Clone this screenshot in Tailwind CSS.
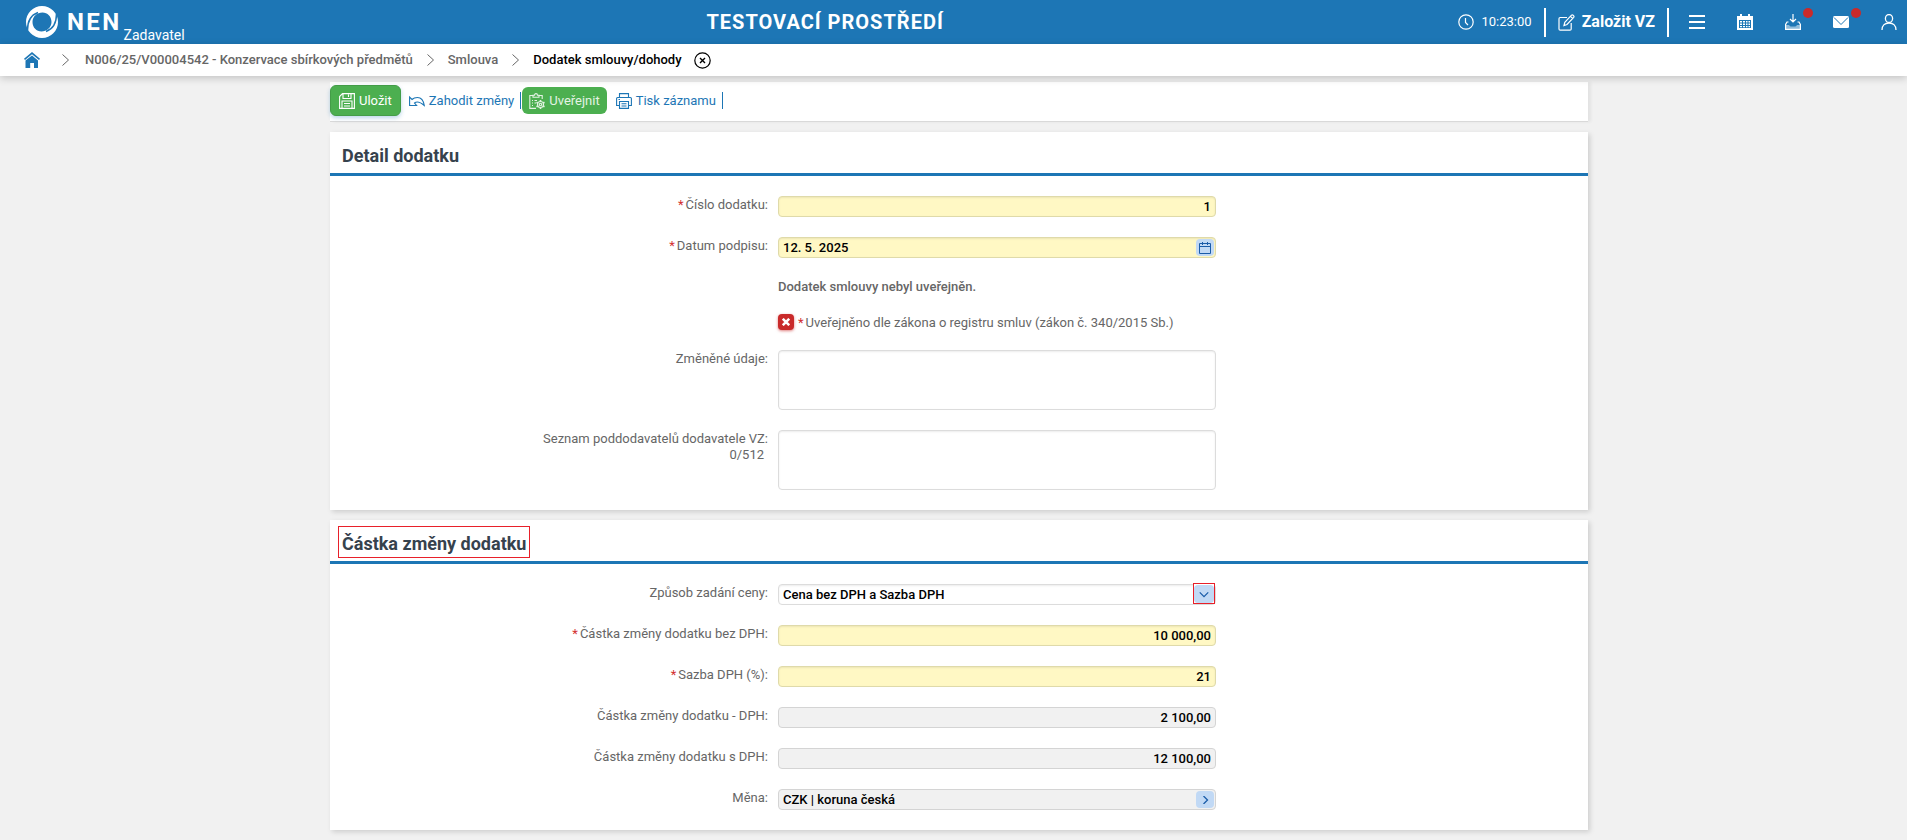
<!DOCTYPE html>
<html lang="cs">
<head>
  <meta charset="UTF-8" />
  <meta name="viewport" content="width=device-width, initial-scale=1" />
  <title>NEN - Dodatek smlouvy/dohody</title>
  <script src="https://cdn.jsdelivr.net/npm/@tailwindcss/browser@4"></script>
</head>
<body class="bg-[#f1f1f1] font-[Roboto,sans-serif] text-[13px] leading-4 text-[#666] min-h-screen">

  <!-- Top bar -->
  <header class="flex items-center justify-between h-11 bg-[#1d76b5] text-white">
    <a href="#" class="flex items-center pl-[26px] pr-2 h-11">
      <svg class="size-8 shrink-0" viewBox="0 0 32 32">
        <path fill="currentColor" fill-rule="evenodd" d="M16 0a16 16 0 1 1 0 32 16 16 0 0 1 0-32zm.5 6.500C11 6.500 6.500 10.500 6.500 16S10.500 25.500 15.500 25.500 25.500 21.500 25.500 16 21.500 6.500 16.500 6.500z" />
        <path d="M1.500 24C1.500 15 5 9 12 6.500M30.500 8c0 9-3.500 15-10.500 17.500" fill="none" stroke="#1d76b5" stroke-width="1.500" />
      </svg>
      <span class="pl-[9px] text-2xl font-bold tracking-widest">NEN</span>
      <span class="self-end pl-[2px] pb-px text-sm leading-4">Zadavatel</span>
    </a>
    <div class="text-xl font-bold tracking-wider">TESTOVACÍ PROSTŘEDÍ</div>
    <div class="flex items-center justify-end pr-[10px]">
      <svg class="size-4 mr-2" viewBox="0 0 16 16" fill="none" stroke="currentColor" stroke-width="1.2"><circle cx="8" cy="8" r="7.2" /><path d="M7.5 4v4.5L10 11" /></svg>
      <span>10:23:00</span>
      <span class="w-[2px] h-[29px] ml-3 mr-3 bg-white"></span>
      <button type="button" class="flex items-center gap-[7px] text-base font-bold cursor-pointer">
        <svg class="size-[17px]" viewBox="0 0 17 17" fill="none" stroke="currentColor" stroke-width="1.2"><path d="M9 3.5H2.200A1.200 1.200 0 0 0 1 4.700V15q0 1.200 1.200 1.200H12q1.200 0 1.200-1.200V9" /><path d="M6 11.500l.8-3.200L13.500 1.200q.8-.6 1.600 0l.6.6q.6.800 0 1.600L9 10.500zM12.500 2.300l2.200 2.200" /></svg>
        Založit VZ
      </button>
      <span class="w-[2px] h-[29px] ml-3 mr-5 bg-white"></span>
      <div class="flex items-center gap-8">
        <button type="button" aria-label="Menu" class="cursor-pointer"><svg class="size-4" viewBox="0 0 16 16" stroke="currentColor" stroke-width="2"><path d="M0 2h16M0 8h16M0 14h16" /></svg></button>
        <button type="button" aria-label="Kalendář" class="cursor-pointer">
          <svg class="size-4" viewBox="0 0 16 16"><path fill="currentColor" d="M0 2h3V0h2v2h6V0h2v2h3v14H0z" /><path fill="#1d76b5" d="M2 6h12v8H2z" /><path fill="currentColor" d="M3 7h2v1.500H3zM6 7h2v1.500H6zM9 7h1.500v1.500H9zM11.500 7H13v1.500h-1.500zM3 9.500h2V11H3zM6 9.500h2V11H6zM9 9.500h1.500V11H9zM11.500 9.500H13V11h-1.500zM3 12h2v1.300H3zM6 12h2v1.300H6zM9 12h1.500v1.300H9zM11.500 12H13v1.300h-1.500z" /></svg>
        </button>
        <button type="button" aria-label="Stažené soubory" class="relative cursor-pointer">
          <svg class="size-4" viewBox="0 0 16 16" fill="none" stroke="currentColor" stroke-width="1.200"><path d="M8 0v8M5 5l3 3 3-3M3.500 8H2L.6 10.500v4.900h14.800v-4.900L14 8h-1.500" /><path d="M.6 11H4q1 1.500 2 1.500h4q1 0 2-1.500h3.400V15.400H.6z" fill="currentColor" fill-opacity=".5" stroke="none" /></svg>
          <span class="absolute -top-[6px] left-[18px] size-[10px] rounded-full bg-[#c92a2a]"></span>
        </button>
        <button type="button" aria-label="Zprávy" class="relative cursor-pointer">
          <svg class="size-4" viewBox="0 0 16 16"><rect y="2" width="16" height="12" rx="1.500" fill="currentColor" /><path d="M1 3.500l7 7 7-7" fill="none" stroke="#1d76b5" /></svg>
          <span class="absolute -top-[6px] left-[18px] size-[10px] rounded-full bg-[#c92a2a]"></span>
        </button>
        <button type="button" aria-label="Uživatel" class="cursor-pointer"><svg class="size-4" viewBox="0 0 16 16" fill="none" stroke="currentColor" stroke-width="1.300"><ellipse cx="8" cy="4.500" rx="3.600" ry="4" /><path d="M1 16c0-4.500 3-7 7-7s7 2.500 7 7" /></svg></button>
      </div>
    </div>
  </header>

  <!-- Breadcrumbs -->
  <nav class="relative flex items-center h-8 pl-6 bg-white font-medium shadow-[0_2px_8px_rgba(0,0,0,0.2)]">
    <a href="#" aria-label="Domů"><svg class="size-4" viewBox="0 0 16 16" fill="#1d76b5"><path d="M8 0l8 6.700-1 1.200L8 2.200 1 7.900 0 6.700z" /><path d="M8 3.500l6 5V16h-4v-5H6.200v5H1.500V8.500z" /></svg></a>
    <svg class="w-[7px] h-3 ml-[22px] mr-4" viewBox="0 0 7 12" fill="none" stroke="#666"><path d="M.5.5L6.500 6l-6 5.500" /></svg>
    <a href="#">N006/25/V00004542 - Konzervace sbírkových předmětů</a>
    <svg class="w-[7px] h-3 mx-[14px]" viewBox="0 0 7 12" fill="none" stroke="#666"><path d="M.5.5L6.500 6l-6 5.500" /></svg>
    <a href="#">Smlouva</a>
    <svg class="w-[7px] h-3 mx-[14px]" viewBox="0 0 7 12" fill="none" stroke="#666"><path d="M.5.5L6.500 6l-6 5.500" /></svg>
    <span class="text-black">Dodatek smlouvy/dohody</span>
    <button type="button" aria-label="Zavřít" class="ml-3 cursor-pointer"><svg class="size-[17px]" viewBox="0 0 17 17" fill="none" stroke="#000"><circle cx="8.500" cy="8.500" r="7.700" stroke-width="1.200" /><path d="M6 6l5 5M11 6l-5 5" stroke-width="1.400" /></svg></button>
  </nav>

  <main class="pt-[6px] pb-[10px] pl-[11px]">
    <div class="flex flex-col gap-[10px] max-w-[1258px] mx-auto">

      <!-- Record actions -->
      <div class="flex items-center h-10 pb-[2px] bg-white border-b border-[#d9d9d9] text-[#1d76b5] shadow-[3px_0_3px_rgba(0,0,0,0.06)]">
        <button type="button" class="flex items-center gap-1 h-[31px] px-2 rounded-md border border-[#449d48] bg-[#4caf50] text-white shadow-[0_2px_4px_rgba(29,118,181,0.3)] cursor-pointer">
          <svg class="size-4" viewBox="0 0 16 16" fill="none" stroke="currentColor" stroke-width="1.100"><path d="M3.500.6h11.900v14.800H.6V3.500zM4 .6v4.900h8V.6M9.500 1.500v2.500M3 15.400V8h10v7.400M5 10.500h6M5 13h6" /></svg>
          Uložit
        </button>
        <button type="button" class="flex items-center gap-1 ml-2 cursor-pointer">
          <svg class="size-4" viewBox="0 0 16 16" fill="none" stroke="currentColor" stroke-width="1.100"><path d="M.6 4v8.500h7L5.500 10q3.500-3 9.800 2.500Q14 4.500 8.500 4.500 5 4.500 3 6.500z" /></svg>
          Zahodit změny
        </button>
        <span class="w-px h-[17px] ml-[6px] mr-px bg-[#1d76b5]"></span>
        <button type="button" class="flex items-center gap-1 h-[27px] px-[7px] rounded-md bg-[#4caf50] text-[#e4f3e4] cursor-pointer">
          <svg class="size-4" viewBox="0 0 16 16" fill="none" stroke="currentColor" stroke-width="1.100"><path d="M4 2.500H.8v12.900H7M10 2.500h3.200V6M4 4.200V2.300h1.500Q5.500.6 7 .6t1.500 1.700H10v1.900zM3 7.500h1M3 10h1M3 12.500h1M5.500 7.500h2.500M5.500 10H7" /><circle cx="11.500" cy="11.500" r="3" /><circle cx="11.500" cy="11.500" r="1.200" /><path d="M11.500 7v1.500M11.500 14.500V16M7.500 9.300l1.300.8M14.200 13l1.300.8M7.500 13.800l1.300-.8M14.200 10l1.300-.8" stroke-width="1.600" /></svg>
          Uveřejnit
        </button>
        <button type="button" class="flex items-center gap-1 ml-[9px] cursor-pointer">
          <svg class="size-4" viewBox="0 0 16 16" fill="none" stroke="currentColor" stroke-width="1.100"><path d="M3.500 4.500V.6h9v3.900M3.500 12.500H.6V5.500q0-1 1-1h12.800q1 0 1 1v7h-2.900M3.500 8.500h9v6.900h-9zM5.500 10.800h5M5.500 13h5M2.500 6.500h1.500" /></svg>
          Tisk záznamu
        </button>
        <span class="w-px h-[17px] ml-[6px] bg-[#1d76b5]"></span>
      </div>

      <section class="bg-white shadow-[2px_2px_5px_rgba(0,0,0,0.15)]">
        <div class="flex items-end h-11 px-2 pb-[3px] border-b-3 border-[#1d76b5]">
          <h2 class="px-[3px] pt-1 text-lg leading-[26px] font-bold text-[#36424d] border border-transparent">Detail dodatku</h2>
        </div>
        <form class="flex flex-col gap-5 py-5">
          <div class="grid grid-cols-[448fr_438fr_372fr]">
            <label for="cislo" class="pt-px pr-[10px] text-right"><span class="pr-[2px] text-[#d32f2f]">*</span>Číslo dodatku:</label>
            <input id="cislo" type="text" value="1" class="h-[21px] px-1 rounded border border-[#dfdaaa] bg-[#fff8c4] text-right font-medium text-black shadow-[inset_0_1px_2px_rgba(0,0,0,0.08)]">
          </div>
          <div class="grid grid-cols-[448fr_438fr_372fr]">
            <label for="datum" class="pt-px pr-[10px] text-right"><span class="pr-[2px] text-[#d32f2f]">*</span>Datum podpisu:</label>
            <div class="relative">
              <input id="datum" type="text" value="12. 5. 2025" class="block w-full h-[21px] px-1 rounded border border-[#dfdaaa] bg-[#fff8c4] font-medium text-black shadow-[inset_0_1px_2px_rgba(0,0,0,0.08)]">
              <button type="button" aria-label="Vybrat datum" class="absolute right-[2px] top-[2px] flex items-center justify-center w-[18px] h-[17px] rounded bg-[#c1d9f5] text-[#1a5ca8] cursor-pointer">
                <svg class="size-3" viewBox="0 0 12 12" fill="none" stroke="currentColor"><path d="M.5 1.500h11v10H.5zM.5 4.500h11M3.500 0v3M8.500 0v3" /></svg>
              </button>
            </div>
          </div>
          <div class="grid grid-cols-[448fr_438fr_372fr] h-4">
            <p class="col-start-2 pt-px font-medium">Dodatek smlouvy nebyl uveřejněn.</p>
          </div>
          <div class="grid grid-cols-[448fr_438fr_372fr] h-4">
            <div class="relative col-start-2 flex items-start gap-1">
              <input id="uverejneno" type="checkbox" class="appearance-none size-4 rounded bg-[#c92a2a] shadow-[0_1px_3px_rgba(201,42,42,0.6)]">
              <svg class="absolute left-1 top-1 size-2 pointer-events-none" viewBox="0 0 8 8" stroke="#fff" stroke-width="2.500"><path d="M.8.800l6.400 6.400M7.200.8L.8 7.200" /></svg>
              <label for="uverejneno" class="pt-px"><span class="pr-[2px] text-[#d32f2f]">*</span>Uveřejněno dle zákona o registru smluv (zákon č. 340/2015 Sb.)</label>
            </div>
          </div>
          <div class="grid grid-cols-[448fr_438fr_372fr]">
            <label for="udaje" class="pt-px pr-[10px] text-right">Změněné údaje:</label>
            <textarea id="udaje" class="h-[60px] px-1 resize-none rounded border border-[#dcdcdc] bg-white font-medium text-black shadow-[inset_0_1px_2px_rgba(0,0,0,0.08)]"></textarea>
          </div>
          <div class="grid grid-cols-[448fr_438fr_372fr]">
            <label for="seznam" class="pt-px pr-[10px] text-right">Seznam poddodavatelů dodavatele VZ:<span class="block pr-1">0/512</span></label>
            <textarea id="seznam" class="h-[60px] px-1 resize-none rounded border border-[#dcdcdc] bg-white font-medium text-black shadow-[inset_0_1px_2px_rgba(0,0,0,0.08)]"></textarea>
          </div>
        </form>
      </section>

      <section class="bg-white shadow-[2px_2px_5px_rgba(0,0,0,0.15)]">
        <div class="flex items-end h-11 px-2 pb-[3px] border-b-3 border-[#1d76b5]">
          <h2 class="px-[3px] pt-1 text-lg leading-[26px] font-bold text-[#36424d] border border-[#e8202a]">Částka změny dodatku</h2>
        </div>
        <form class="flex flex-col gap-5 py-5">
          <div class="grid grid-cols-[448fr_438fr_372fr]">
            <label for="zpusob" class="pt-px pr-[10px] text-right">Způsob zadání ceny:</label>
            <div class="relative">
              <select id="zpusob" class="block appearance-none w-full h-[21px] px-1 rounded border border-[#dcdcdc] bg-white font-medium text-black shadow-[inset_0_1px_2px_rgba(0,0,0,0.08)]">
                <option>Cena bez DPH a Sazba DPH</option>
              </select>
              <span class="absolute right-px -top-px w-[22px] h-[21px] pt-px border border-[#e8202a] bg-white pointer-events-none">
                <svg class="w-full h-full rounded bg-[#c1d9f5]" viewBox="0 0 18 17" fill="none" stroke="#1a5ca8" stroke-width="1.200"><path d="M5 7l4 4 4-4" /></svg>
              </span>
            </div>
          </div>
          <div class="grid grid-cols-[448fr_438fr_372fr]">
            <label for="bezdph" class="pt-px pr-[10px] text-right"><span class="pr-[2px] text-[#d32f2f]">*</span>Částka změny dodatku bez DPH:</label>
            <input id="bezdph" type="text" value="10 000,00" class="h-[21px] px-1 rounded border border-[#dfdaaa] bg-[#fff8c4] text-right font-medium text-black shadow-[inset_0_1px_2px_rgba(0,0,0,0.08)]">
          </div>
          <div class="grid grid-cols-[448fr_438fr_372fr]">
            <label for="sazba" class="pt-px pr-[10px] text-right"><span class="pr-[2px] text-[#d32f2f]">*</span>Sazba DPH (%):</label>
            <input id="sazba" type="text" value="21" class="h-[21px] px-1 rounded border border-[#dfdaaa] bg-[#fff8c4] text-right font-medium text-black shadow-[inset_0_1px_2px_rgba(0,0,0,0.08)]">
          </div>
          <div class="grid grid-cols-[448fr_438fr_372fr]">
            <label for="dph" class="pt-px pr-[10px] text-right">Částka změny dodatku - DPH:</label>
            <input id="dph" type="text" value="2 100,00" readonly class="h-[21px] px-1 rounded border border-[#d4d4d4] bg-[#f1f1f1] text-right font-medium text-black">
          </div>
          <div class="grid grid-cols-[448fr_438fr_372fr]">
            <label for="sdph" class="pt-px pr-[10px] text-right">Částka změny dodatku s DPH:</label>
            <input id="sdph" type="text" value="12 100,00" readonly class="h-[21px] px-1 rounded border border-[#d4d4d4] bg-[#f1f1f1] text-right font-medium text-black">
          </div>
          <div class="grid grid-cols-[448fr_438fr_372fr]">
            <label for="mena" class="pt-px pr-[10px] text-right">Měna:</label>
            <div class="relative">
              <input id="mena" type="text" value="CZK | koruna česká" readonly class="block w-full h-[21px] px-1 rounded border border-[#d4d4d4] bg-[#f1f1f1] font-medium text-black">
              <button type="button" aria-label="Detail měny" class="absolute right-[2px] top-[2px] flex items-center justify-center w-[18px] h-[17px] rounded bg-[#c1d9f5] text-[#1a5ca8] cursor-pointer">
                <svg class="size-2" viewBox="0 0 8 8" fill="none" stroke="currentColor" stroke-width="1.300"><path d="M2.500 0l4 4-4 4" /></svg>
              </button>
            </div>
          </div>
        </form>
      </section>

    </div>
  </main>
</body>
</html>
